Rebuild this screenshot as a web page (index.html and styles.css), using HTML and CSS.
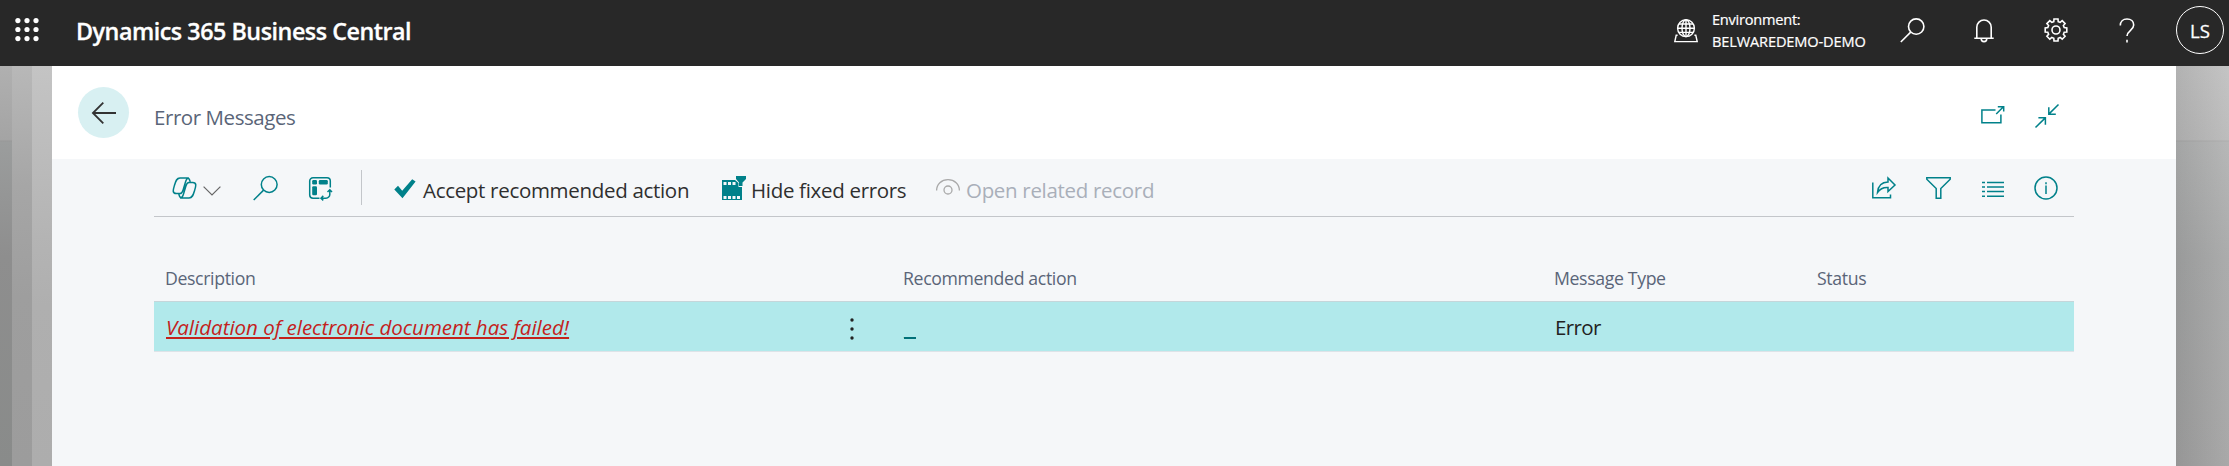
FILE: index.html
```
<!DOCTYPE html>
<html lang="en">
<head>
<meta charset="utf-8">
<title>Error Messages - Dynamics 365 Business Central</title>
<link rel="stylesheet" href="styles.css">
</head>
<body>
<header class="topbar">
  <svg class="waffle" viewBox="0 0 24 24"><g fill="#fff"><circle cx="2.9" cy="2.6" r="2.6"/><circle cx="12" cy="2.6" r="2.6"/><circle cx="21" cy="2.6" r="2.6"/><circle cx="2.9" cy="11.5" r="2.6"/><circle cx="12" cy="11.5" r="2.6"/><circle cx="21" cy="11.5" r="2.6"/><circle cx="2.9" cy="20.6" r="2.6"/><circle cx="12" cy="20.6" r="2.6"/><circle cx="21" cy="20.6" r="2.6"/></g></svg>
  <h1 class="product">Dynamics 365 Business Central</h1>
  <svg class="ico globe" viewBox="0 0 24 24"><circle cx="12" cy="9.2" r="8.4"/><ellipse cx="12" cy="9.2" rx="4" ry="8.4"/><path d="M12 .8v16.8M3.6 9.2h16.8M4.9 5h14.2M4.9 13.4h14.2M3.6 16.3H2.2L.8 22.6h22.4l-1.4-6.3h-1.4"/></svg>
  <div class="env"><span class="env-label">Environment:</span><span class="env-name">BELWAREDEMO-DEMO</span></div>
  <svg class="ico search" viewBox="0 0 25 25"><circle cx="16.2" cy="8.6" r="7.7"/><path d="M10.7 14.1.8 24"/></svg>
  <svg class="ico bell" viewBox="0 0 20 24"><path d="M.3 19.2h19.4M2.8 19.2V8.2a7.2 7.2 0 0 1 14.4 0v11M7.2 19.8a2.8 2.8 0 0 0 5.6 0"/></svg>
  <svg class="ico gear" viewBox="0 0 24 24"><circle cx="12" cy="12" r="4"/><path d="M9.8 3.6 10 1h4l.2 2.6 2 .8 2-1.7 2.9 2.9-1.7 2 .8 2L22.8 10v4l-2.6.2-.8 2.1 1.7 2-2.9 2.9-2-1.7-2 .8L14 23h-4l-.2-2.7-2-.8-2 1.7-2.9-2.9 1.7-2-.8-2.1L1.2 14v-4l2.6-.4.8-2-1.7-2 2.9-2.9 2 1.7z"/></svg>
  <svg class="ico help" viewBox="0 0 16 25"><path d="M1.3 7.5C1.3 3.5 4 1 8 1s6.7 2.300 6.700 6c0 5.500-6.700 5.700-6.700 11"/><path d="M8 21.800v2.600"/></svg>
  <div class="avatar">LS</div>
</header>
<div class="stage">
  <div class="edge left"><i></i><i></i><i></i></div>
  <main class="card">
    <div class="page-head">
      <button class="back" aria-label="Back"><svg viewBox="0 0 24 22"><path d="M24 11H.9M11.3.7.9 11l10.400 10.300"/></svg></button>
      <h2 class="page-title">Error Messages</h2>
      <svg class="tico popout" viewBox="0 0 24 18"><path d="M14.500 3.900H.9v12.800h19V8.500M15.200 8l7-7M16.800.8h5.900v4.700"/></svg>
      <svg class="tico shrink" viewBox="0 0 24 24"><path d="M.5 23.500 10.300 13.900M3.400 13.700h7v7M23.500.5l-9.700 9.600M13.800 3.300v6.900h7"/></svg>
    </div>
    <div class="body">
      <div class="toolbar">
        <svg class="tico copilot" viewBox="0 0 25 22"><path d="M8 1h7.600c1.700 0 2 1.500 2.600 3.700M8 1C4.500 1 3.700 4.200 2.500 8.200 1.200 12.500-.2 16.600 4.300 16.600h3.800c1.900 0 2.300-1.200 3-3.600L13.500 5c.7-2.500 1.200-4 3.400-4M17 21H9.400c-1.700 0-2-1.500-2.600-4.100M17 21c3.500 0 4.300-3.200 5.500-7.200 1.300-4.300 2.700-8.400-1.800-8.400h-3.800c-1.900 0-2.300 1.200-3 3.600L11.500 17c-.7 2.500-1.200 4-3.400 4"/></svg>
        <svg class="chev" viewBox="0 0 18 10"><path d="M.6.6 9 9 17.400.6"/></svg>
        <svg class="tico find" viewBox="0 0 25 25"><circle cx="16.200" cy="8.500" r="7.900"/><path d="M10.600 14.100.7 24"/></svg>
        <svg class="tico analyze" viewBox="0 0 23 23"><path d="M10.500 21.200H4A3.300 3.300 0 0 1 .7 18V4A3.300 3.300 0 0 1 4 .7h14A3.300 3.300 0 0 1 21.300 4v6.500M12 21.200h5a3.800 3.800 0 0 0 3.800-3.800v-3.500M14.300 18.900 12 21.200l2.300 2.200M18.500 15l2.300-2.300L23 15"/><g class="solid"><rect x="3.200" y="3" width="4.800" height="4.500" rx="1.200"/><rect x="9.800" y="3" width="9" height="4.500" rx="1.200"/><rect x="3.200" y="9.300" width="4.800" height="9" rx="1.200"/></g></svg>
        <i class="sep"></i>
        <svg class="check" viewBox="0 0 22 20"><path d="M.3 10.500 4 6.800l4.200 5L18.200.2l3.400 2.200L8.500 19.300z"/></svg>
        <span class="cmd accept">Accept recommended action</span>
        <svg class="film" viewBox="0 0 24 24"><path fill="#00818a" d="M0 4h20v20H0z"/><path fill="#f5f7f9" d="M13 0h11v4l-3 3v4h-4.500V7L13 4z"/><path fill="#00818a" d="M14 0h10v3l-3.500 3.500V10H17V6.500L14 3z"/><path fill="#f5f7f9" d="M1.500 6h3v3h-3zM6 6h3v3H6zM10.500 6h3v3h-3zM1.500 20h3v3h-3zM6 20h3v3H6zM10.500 20h3v3h-3zM15 20h3v3h-3z"/></svg>
        <span class="cmd hide">Hide fixed errors</span>
        <svg class="eye" viewBox="0 0 24 16"><path d="M.6 11.500C.6 5 5.500.7 12 .7S23.400 5 23.400 11.500"/><circle cx="12" cy="11" r="4"/></svg>
        <span class="cmd open">Open related record</span>
        <svg class="tico share" viewBox="0 0 24 22"><path d="M.8 5.500v15.200h17.700v-3.200M16 1l7 7-7 6.500v-4C11.500 10.200 8 11.800 5.500 15.500 6 9.500 9.500 5.200 16 5z"/></svg>
        <svg class="tico funnel" viewBox="0 0 25 22"><path d="M.8.8h23.400v1.400L14.800 11.500v9.700h-4.600v-9.700L.8 2.200z"/></svg>
        <svg class="tico list" viewBox="0 0 22 17"><path d="M0 1.500h3M5 1.500h17M0 6h3M5 6h17M0 10.500h3M5 10.500h17M0 15.200h3M5 15.200h17"/></svg>
        <svg class="tico info" viewBox="0 0 24 24"><circle cx="12" cy="12" r="11"/><path d="M12 9.500V18M12 6.200v2"/></svg>
      </div>
      <div class="grid">
        <div class="row head"><span>Description</span><span>Recommended action</span><span>Message Type</span><span>Status</span></div>
        <div class="row line">
          <div class="first"><a class="msg">Validation of electronic document has failed!</a><svg class="more" viewBox="0 0 4 22"><circle cx="2" cy="2" r="1.700"/><circle cx="2" cy="11" r="1.700"/><circle cx="2" cy="20" r="1.700"/></svg></div>
          <div><a class="act">_</a></div>
          <span class="type">Error</span>
          <span></span>
        </div>
      </div>
    </div>
  </main>
  <div class="edge right"></div>
</div>
</body>
</html>
```
FILE: styles.css
```
* { box-sizing: border-box; }
body { margin: 0; width: 2229px; height: 466px; overflow: hidden; font-family: "Open Sans", "Noto Sans", sans-serif; background: #aaa; }
h1, h2 { margin: 0; font-weight: 400; }
svg { display: block; flex: none; overflow: visible; }
span { white-space: nowrap; }
.topbar { height: 66px; background: #282828; color: #fff; display: flex; align-items: flex-start; }
.waffle { width: 24px; height: 24px; margin: 18px 0 0 15px; }
.product { width: 1598px; margin-left: 37px; padding-top: 15px; font-size: 23.3px; line-height: 33px; font-weight: 600; letter-spacing: -.47px; -webkit-text-stroke: .3px #fff; }
.ico { fill: none; stroke: #fff; stroke-width: 1.6; }
.globe { width: 24px; height: 24px; margin-top: 19px; stroke-width: 1.4; }
.env { width: 188px; margin-left: 14px; padding-top: 9px; display: flex; flex-direction: column; font-size: 14.6px; line-height: 22px; -webkit-text-stroke: .2px #fff; }
.env-label { letter-spacing: -.25px; margin-top: -1px; }
.env-name { letter-spacing: -.15px; }
.search { width: 25px; height: 25px; margin-top: 18px; }
.bell { width: 20px; height: 24px; margin: 19px 0 0 49px; }
.gear { width: 24px; height: 24px; margin: 18px 0 0 50px; }
.help { width: 16px; height: 25px; margin: 18px 0 0 51px; }
.avatar { width: 48px; height: 48px; margin: 6px 0 0 41px; border: 1.4px solid #fff; border-radius: 50%; display: flex; justify-content: center; font-size: 18.6px; line-height: 48px; -webkit-text-stroke: .3px #fff; }
.stage { display: grid; grid-template-columns: 52px 1fr 53px; height: 400px; }
.edge.left { display: grid; grid-template-columns: 12px 20px 20px; }
.left i:nth-child(1) { background: linear-gradient(#b0b0b0, #a4a4a4 74px, #989898 75px, #9b9d9d 76px, #8e8e8e 190px, #898b8a); }
.left i:nth-child(2) { background: linear-gradient(#b8b8b8, #a6a6a6 120px, #9e9e9e 230px, #9c9c9c); }
.left i:nth-child(3) { background: linear-gradient(#c4c4c4, #b4b4b4 170px, #afafaf 240px, #adadad); }
.edge.right { background: linear-gradient(90deg, #00000010, #ffffff18), linear-gradient(#bebebe, #b6b6b6 74px, #a6a6a6 75px, #afb0b0 76px, #a3a4a4 190px, #a0a0a0); }
.card { background: #f5f7f9; }
.page-head { height: 93px; background: #fff; display: flex; }
.back { width: 51px; height: 51px; margin: 21px 0 0 26px; padding: 0; border: 0; border-radius: 50%; background: #d8f0f2; display: grid; place-items: center; }
.back svg { width: 24px; height: 22px; fill: none; stroke: #333; stroke-width: 1.8; }
.page-title { width: 1827px; margin-left: 25px; padding-top: 36px; color: #5a6578; font-size: 20.5px; line-height: 30px; letter-spacing: -.43px; }
.tico { fill: none; stroke: #00818a; stroke-width: 1.5; }
.popout { width: 24px; height: 18px; margin-top: 40px; }
.shrink { width: 24px; height: 24px; margin: 38px 0 0 30px; }
.body { padding: 0 102px; }
.toolbar { height: 58px; border-bottom: 1px solid #c3c6ca; display: flex; color: #2f2f2f; font-size: 20.5px; line-height: 30px; letter-spacing: -.31px; }
.copilot { width: 25px; height: 22px; margin: 18px 0 0 18px; }
.chev { width: 18px; height: 10px; margin: 27px 0 0 6px; fill: none; stroke: #666; stroke-width: 1.2; }
.find { width: 25px; height: 25px; margin: 17px 0 0 32px; }
.analyze { width: 23px; height: 23px; margin: 18px 0 0 31px; }
.solid { fill: #00818a; stroke: none; }
.sep { width: 1px; height: 35px; margin: 11px 0 0 29px; background: #c3c6ca; }
.check { width: 22px; height: 20px; margin: 20px 0 0 32px; fill: #00818a; }
.cmd { padding-top: 16px; flex: none; }
.accept { width: 299px; margin-left: 7px; }
.film { width: 24px; height: 24px; margin-top: 17px; }
.hide { width: 185px; margin-left: 5px; }
.eye { width: 24px; height: 16px; margin-top: 20px; fill: none; stroke: #a9a9a9; stroke-width: 1.3; }
.open { width: 906px; margin-left: 6px; color: #a9afb9; }
.share { width: 24px; height: 22px; margin-top: 18px; }
.funnel { width: 25px; height: 22px; margin: 18px 0 0 30px; }
.list { width: 22px; height: 17px; margin: 22px 0 0 31px; }
.info { width: 24px; height: 24px; margin: 17px 0 0 30px; }
.row { display: grid; grid-template-columns: 738px 651px 263px 1fr; }
.head { height: 84px; padding: 47px 0 0 11px; color: #5a6578; font-size: 17.7px; line-height: 28px; letter-spacing: -.36px; }
.line { height: 51px; padding-left: 12px; background: #b1e9eb; border-top: 1px solid #c5d6da; border-bottom: 1px solid #dde3e8; font-size: 20.5px; line-height: 50px; color: #222; }
.first { display: flex; }
.msg { width: 684px; color: #c4221c; font-style: italic; text-decoration: underline; text-decoration-thickness: 2px; text-underline-offset: 2px; }
.more { width: 4px; height: 22px; margin-top: 16px; fill: #222; }
.act { color: #007078; letter-spacing: 3px; text-decoration: underline; text-decoration-thickness: 2px; text-underline-offset: 2px; text-decoration-skip-ink: none; }
.type { letter-spacing: -.6px; }
```
